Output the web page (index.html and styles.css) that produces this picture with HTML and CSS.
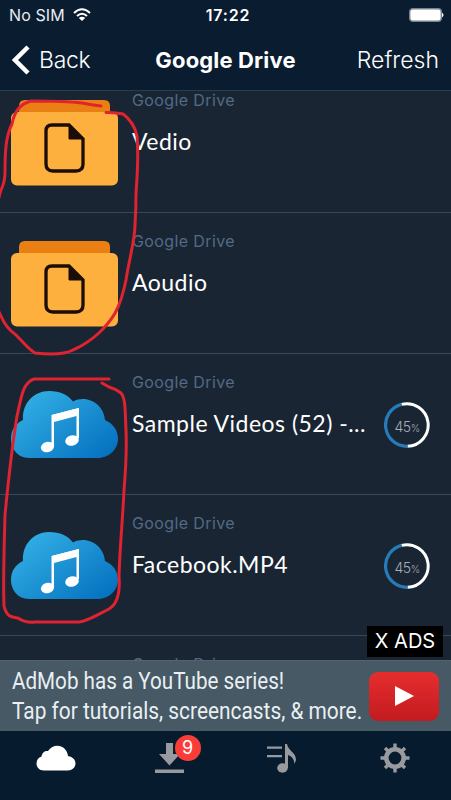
FILE: index.html
```html
<!DOCTYPE html>
<html lang="en">
<head>
<meta charset="utf-8">
<title>Google Drive</title>
<link rel="stylesheet" href="styles.css">
</head>
<body>
<svg class="defs" width="0" height="0">
  <defs>
    <linearGradient id="sky" x1="0" y1="0.1" x2="1" y2="0.9"><stop offset="0" stop-color="#35b3e6"/><stop offset="1" stop-color="#0470c0"/></linearGradient>
    <symbol id="folder" viewBox="0 0 107 86">
      <path d="M8 15V6q0-6 6-6h79q6 0 6 6v9z" fill="#ea8014"/>
      <rect y="12" width="107" height="73.500" rx="6" fill="#fdb03e"/>
      <path d="M41 25H58L72 39V64Q72 71 65 71H42Q35 71 35 64V31Q35 25 41 25Z" fill="none" stroke="#1b0d03" stroke-width="3.300"/>
      <path d="M58 25V39H72Z" fill="#1b0d03" stroke="#1b0d03" stroke-width="1"/>
    </symbol>
    <symbol id="cloud" viewBox="0 0 107 67">
      <path d="M18 67C7 67 0 58 0 48C0 39 4 33 12 29C11 12 23 0 38 0C49 0 57 4 62 10.500C77 3 93 14 94 29C103 33 107 40 107 48C107 58 98 67 87 67Z" fill="url(#sky)"/>
      <path d="M40.500 24L68 17V47H65.500V25L43 31V54H40.500Z" fill="#fff"/>
      <path d="M41 24L67.500 17V23.500L41 30.500Z" fill="#fff"/>
      <ellipse cx="36.500" cy="56" rx="6.700" ry="5.200" transform="rotate(-15 36.500 56)" fill="#fff"/>
      <ellipse cx="61" cy="49.500" rx="6.900" ry="5.200" transform="rotate(-15 61 49.500)" fill="#fff"/>
    </symbol>
    <symbol id="ring" viewBox="0 0 46 46">
      <path d="M17.500 2.400A21.300 21.300 0 1 1 23.500 44.300" fill="none" stroke="#fff" stroke-width="3"/>
      <path d="M23.500 44.300A21.300 21.300 0 0 1 17.500 2.400" fill="none" stroke="#257cb8" stroke-width="3.200"/>
    </symbol>
  </defs>
</svg>
<div class="phone">
  <header class="header">
    <div class="status">
      <div class="carrier"><span>No SIM</span>
        <svg width="18" height="14" viewBox="0 0 18 14" fill="none" stroke="#fff" stroke-width="2"><path d="M1 5Q9-2.500 17 5M4 8Q9 3.500 14 8"/><path d="M9 13L5.800 10Q9 7.500 12.200 10Z" fill="#fff" stroke="none"/></svg>
      </div>
      <span class="time">17:22</span>
      <svg class="battery" width="35" height="14" viewBox="0 0 35 14"><rect x=".7" y=".7" width="31.600" height="12.600" rx="3" fill="#fff" stroke="#77818c" stroke-width="1.400"/><path d="M33 4.500Q36 7 33 9.500Z" fill="#fff"/></svg>
    </div>
    <nav class="nav">
      <a class="back"><svg width="18" height="30" viewBox="0 0 18 30"><path d="M16 2L3 15L16 28" fill="none" stroke="#fff" stroke-width="4.500"/></svg><span>Back</span></a>
      <h1>Google Drive</h1>
      <a class="refresh">Refresh</a>
    </nav>
  </header>
  <main class="list">
    <article class="row"><svg class="thumb folder"><use href="#folder"/></svg><div class="info"><p class="source">Google Drive</p><p class="name">Vedio</p></div></article>
    <article class="row"><svg class="thumb folder"><use href="#folder"/></svg><div class="info"><p class="source">Google Drive</p><p class="name">Aoudio</p></div></article>
    <article class="row"><svg class="thumb cloud"><use href="#cloud"/></svg><div class="info"><p class="source">Google Drive</p><p class="name">Sample Videos (52) -...</p></div><div class="progress"><svg><use href="#ring"/></svg><span>45<small>%</small></span></div></article>
    <article class="row"><svg class="thumb cloud"><use href="#cloud"/></svg><div class="info"><p class="source">Google Drive</p><p class="name">Facebook.MP4</p></div><div class="progress"><svg><use href="#ring"/></svg><span>45<small>%</small></span></div></article>
    <article class="row"><div class="thumb"></div><div class="info"><p class="source">Google Drive</p></div></article>
  </main>
  <aside class="ad">
    <div class="copy"><p class="line1">AdMob has a YouTube series!</p><p class="line2">Tap for tutorials, screencasts, &amp; more.</p></div>
    <div class="play"><svg width="19" height="20" viewBox="0 0 19 20"><path d="M0 0L19 10L0 20Z" fill="#fff"/></svg></div>
    <span class="close">X ADS</span>
  </aside>
  <footer class="tabs">
    <div><svg width="40" height="26" viewBox="0 0 40 26"><path d="M8 25.500C3 25.500 .5 22 .5 18.500C.5 15 2.500 12.500 5.500 11.500C6 7.500 9 5.500 12 6C18-3 31 0 32 11C37 12 39.500 15 39.500 18.500C39.500 22.500 36 25.500 32 25.500Z" fill="#fff"/></svg></div>
    <div class="download"><svg width="29" height="31" viewBox="0 0 29 31" fill="#999a9d"><path d="M11 0H18V11H25L14.500 22.500L4 11H11ZM0 26.500H29V30H0Z"/></svg><b>9</b></div>
    <div><svg width="30" height="29" viewBox="0 0 30 29" fill="#999a9d"><path d="M0 2.500H15V4.700H0ZM0 11H15V13.200H0ZM18 0H20C21 7 29 8 29 16L27.500 20C27 14 24 12 21 11V24H18Z"/><ellipse cx="15.500" cy="24" rx="5.300" ry="4.700"/></svg></div>
    <div><svg width="30" height="30" viewBox="-15 -15 30 30"><circle r="8.700" fill="none" stroke="#999a9d" stroke-width="4.600"/><path d="M0-14.500V-10M0 10V14.500M-14.500 0H-10M10 0H14.500M-10-10L-7-7M7 7L10 10M-10 10L-7 7M7-7L10-10" stroke="#999a9d" stroke-width="3.400"/></svg></div>
  </footer>
  <svg class="marks" width="451" height="800" viewBox="0 0 451 800">
    <path d="M101 106Q92 105 82 103C65 101 49 101 31 101C19 104 14 113 12 124C6 136 5 150 5 172Q5 182 1 190Q-3 202-4 220M106 112.500Q114 112 123 114Q134 122 137 136C139 158 137 176 136 194Q136 208 135 225C135 240 129 260 126 280C120 310 112 320 100 332Q87 344 73 350Q62 356 35 353C28 349 24 343 16 335Q6 328 1 316Q-3 309-4 300"/>
    <path d="M109 379H34C22 383 21 400 17 416C12 447 8 484 5 515C4 551 3 580 4 606C7 618 12 617 18 618Q25 623 35 622H79C88 621 95 616 109 609Q121 602 119 576C120 545 123 515 124 490Q127 455 126 430C125 413 126 399 121 393Q116 389 109 387L102 383"/>
  </svg>
</div>
</body>
</html>
```
FILE: styles.css
```css
* { box-sizing: border-box; }
body { margin: 0; background: #192533; }
.defs { position: absolute; }
.phone { position: relative; width: 451px; height: 800px; overflow: hidden; display: flex; flex-direction: column; font-family: Inter, "Liberation Sans", sans-serif; color: #fff; white-space: nowrap; }
p, h1 { margin: 0; font-weight: 400; }
.header { height: 91px; flex: none; background: #0a1c2f; border-bottom: 1px solid #2a3d4e; }
.status { height: 30px; padding: 0 7px 0 9px; display: grid; grid-template-columns: 1fr auto 1fr; align-items: center; }
.carrier { display: flex; align-items: center; gap: 8px; font-size: 16px; letter-spacing: .1px; color: #e6edf5; }
.time { padding-left: 3px; font-size: 16px; font-weight: 600; letter-spacing: .8px; }
.battery { justify-self: end; }
.nav { height: 60px; padding: 0 12px; display: grid; grid-template-columns: 1fr auto 1fr; align-items: center; line-height: 30px; }
.back { display: flex; align-items: center; gap: 9px; letter-spacing: -.3px; }
.back, .refresh { font-size: 23px; font-weight: 300; }
.nav h1 { font-size: 22px; font-weight: 700; letter-spacing: .15px; }
.refresh { justify-self: end; }
.list { height: 569px; flex: none; overflow: hidden; }
.row { height: 141px; display: flex; padding: 28px 0 0 11px; border-bottom: 1px solid #34495c; }
.row:first-child { margin-top: -19px; }
.thumb { width: 107px; height: 86px; flex: none; }
.cloud { height: 67px; margin-top: 9px; }
.info { width: 252px; margin-left: 14px; margin-top: -10px; }
.source { font-size: 16px; line-height: 20px; color: #526a86; letter-spacing: .38px; }
.name { margin-top: 17px; font-family: Lato, sans-serif; font-size: 23px; line-height: 28px; letter-spacing: .48px; }
.progress { position: relative; width: 46px; height: 46px; margin-top: 20px; display: grid; place-items: center; }
.progress > * { grid-area: 1 / 1; }
.progress svg { width: 46px; height: 46px; }
.progress span { color: #a6adb7; font-size: 14px; font-weight: 300; margin-top: 3px; letter-spacing: -.5px; }
.progress small { font-size: 10px; }
.ad { position: relative; height: 71px; flex: none; background: #465965; border-top: 1px solid #54636f; display: flex; align-items: center; }
.copy { width: 358px; padding-left: 12px; font-family: Roboto, sans-serif; font-size: 24px; line-height: 30px; color: #e9eff2; }
.copy p { width: max-content; transform: scaleX(.86); transform-origin: left; }
.copy .line2 { transform: scaleX(.869); }
.play { width: 70px; height: 49px; margin-left: 11px; border-radius: 9px; background: linear-gradient(#e62d2d, #c21b20); display: grid; place-items: center; }
.close { position: absolute; left: 367px; top: -35px; width: 76px; height: 31px; background: #000; text-align: center; font-size: 20px; line-height: 31px; }
.tabs { height: 69px; background: #071b2e; display: grid; grid-template-columns: repeat(4, 1fr); justify-items: center; padding-top: 12px; }
.tabs div { position: relative; height: 30px; display: grid; place-items: center; }
.download b { position: absolute; left: 20px; top: -8px; width: 26px; height: 26px; border-radius: 50%; background: #fa3d38; text-align: center; font-size: 18px; font-weight: 400; line-height: 26px; }
.marks { position: absolute; inset: 0; fill: none; stroke: #df2330; stroke-width: 3; stroke-linecap: round; stroke-linejoin: round; }
```
